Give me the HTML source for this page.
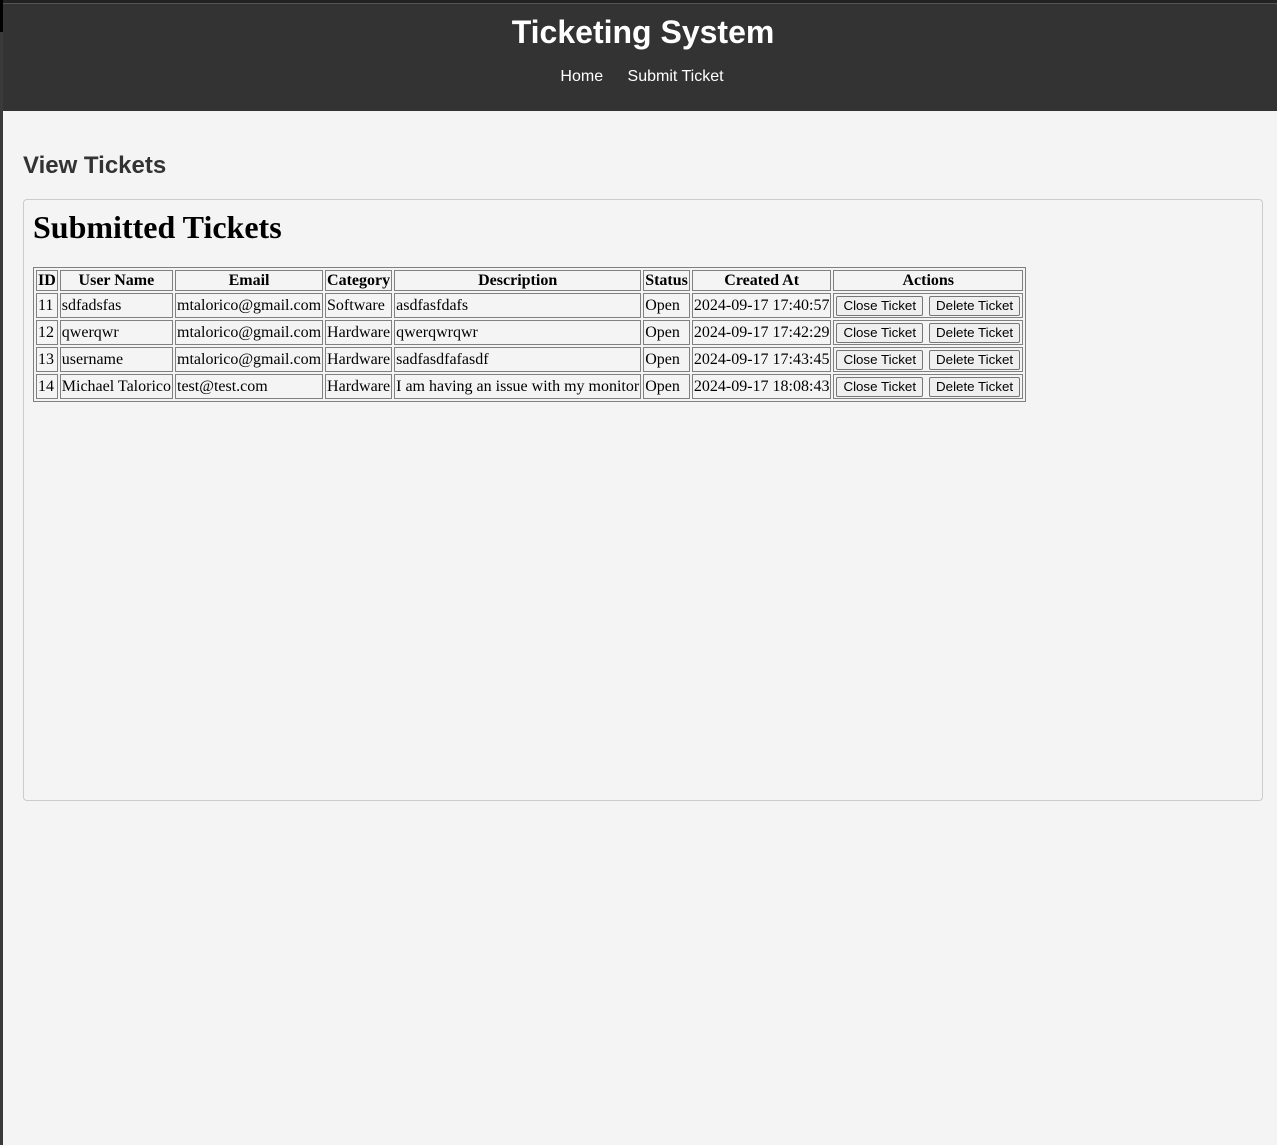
<!DOCTYPE html>
<html><head><style>
html,body{margin:0;padding:0;background:#f4f4f4;width:1277px;height:1145px;overflow:hidden;position:relative}
.strip{position:absolute;left:0;top:0;width:3px;height:1145px;background:#3a3a3a}
.strip2{position:absolute;left:0;top:0;width:3px;height:32px;background:#000}
.topl{position:absolute;left:3px;top:0;width:1274px;height:3px;background:#222}
.topl2{position:absolute;left:3px;top:3px;width:1274px;height:1px;background:#555}
header{position:absolute;left:3px;top:4px;width:1274px;height:107px;background:#333;color:#fff;text-align:center;font-family:"Liberation Sans",sans-serif}
header h1{margin:0;position:absolute;top:10px;left:3px;width:100%;font-size:32px;font-weight:bold}
header nav{position:absolute;top:64px;left:2px;width:100%;font-size:16px}
header nav span{margin:0 10px}
h2{position:absolute;left:23px;top:152px;margin:0;font-family:"Liberation Sans",sans-serif;font-size:24px;color:#333;font-weight:bold}
.box{position:absolute;left:23px;top:199px;width:1238px;height:600px;border:1px solid #ccc;border-radius:4px}
.box h1{position:absolute;left:9px;top:9px;margin:0;font-family:"Liberation Serif",serif;font-size:32px;font-weight:bold}
table{position:absolute;left:9px;top:67px;border:1px solid #808080;border-spacing:2px;font-family:"Liberation Serif",serif;font-size:16px;color:#000}
td,th{border:1px solid #808080;padding:1px;height:21px;white-space:nowrap}
th{height:19px;padding:0 1px}
button{font-family:"Liberation Sans",sans-serif;font-size:13.33px;padding:1px 6px;margin:0 1px;background:#efefef;border:1px solid #767676;border-radius:2px;height:20px}
</style></head><body>
<div class="strip"></div><div class="strip2"></div><div class="topl"></div><div class="topl2"></div>
<header><h1>Ticketing System</h1><nav><span>Home</span> <span>Submit Ticket</span></nav></header>
<h2>View Tickets</h2>
<div class="box"><h1>Submitted Tickets</h1>
<table>
<tr><th>ID</th><th>User Name</th><th>Email</th><th>Category</th><th>Description</th><th>Status</th><th>Created At</th><th>Actions</th></tr>
<tr><td>11</td><td>sdfadsfas</td><td>mtalorico@gmail.com</td><td>Software</td><td>asdfasfdafs</td><td>Open</td><td>2024-09-17 17:40:57</td><td><button>Close Ticket</button> <button>Delete Ticket</button></td></tr>
<tr><td>12</td><td>qwerqwr</td><td>mtalorico@gmail.com</td><td>Hardware</td><td>qwerqwrqwr</td><td>Open</td><td>2024-09-17 17:42:29</td><td><button>Close Ticket</button> <button>Delete Ticket</button></td></tr>
<tr><td>13</td><td>username</td><td>mtalorico@gmail.com</td><td>Hardware</td><td>sadfasdfafasdf</td><td>Open</td><td>2024-09-17 17:43:45</td><td><button>Close Ticket</button> <button>Delete Ticket</button></td></tr>
<tr><td>14</td><td>Michael Talorico</td><td>test@test.com</td><td>Hardware</td><td>I am having an issue with my monitor</td><td>Open</td><td>2024-09-17 18:08:43</td><td><button>Close Ticket</button> <button>Delete Ticket</button></td></tr>
</table></div>
</body></html>
